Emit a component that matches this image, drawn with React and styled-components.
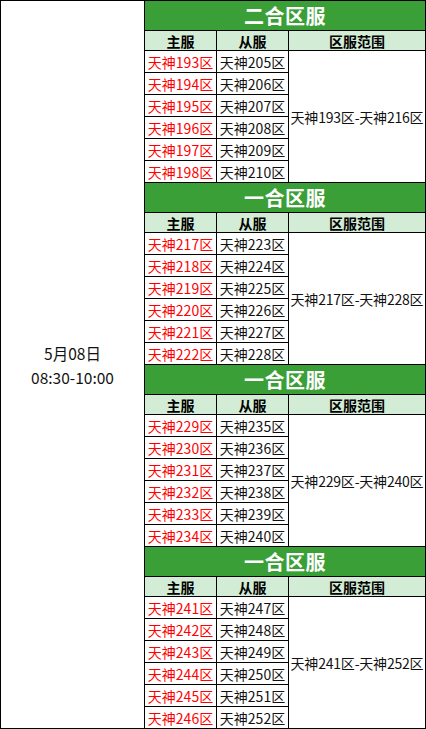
import React from 'react';
import styled, { createGlobalStyle } from 'styled-components';

const GlobalStyle = createGlobalStyle`
  html, body {
    margin: 0;
    padding: 0;
    background: #fff;
  }
  body {
    font-family: "Noto Sans CJK SC", "Noto Sans", sans-serif;
  }
`;

const Board = styled.div`
  display: grid;
  grid-template-columns: 143px 280px;
  gap: 1px;
  padding: 1px;
  width: 424px;
  background: #000;
`;

const DateCell = styled.div`
  background: #fff;
  display: flex;
  flex-direction: column;
  align-items: center;
  justify-content: center;
  font-size: 15.5px;
  line-height: 24px;
  color: #111;
`;

const Groups = styled.div`
  display: flex;
  flex-direction: column;
  gap: 1px;
`;

const Group = styled.div`
  display: grid;
  grid-template-columns: 71px 71px 136px;
  grid-template-rows: 29px 19px repeat(6, 21px);
  gap: 1px;
`;

const Title = styled.div`
  grid-column: 1 / 4;
  background: #3a9f37;
  color: #fff;
  font-weight: 700;
  font-size: 20px;
  display: flex;
  align-items: center;
  justify-content: center;
  letter-spacing: 0.5px;
`;

const HeadCell = styled.div`
  background: #d3ecd5;
  color: #000;
  font-weight: 700;
  font-size: 14px;
  display: flex;
  align-items: center;
  justify-content: center;
`;

const Cell = styled.div`
  background: #fff;
  color: ${p => (p.$main ? '#ff0000' : '#111')};
  font-size: 14px;
  line-height: 20px;
  display: flex;
  align-items: center;
  justify-content: center;
  white-space: nowrap;
`;

const RangeCell = styled(Cell)`
  grid-column: 3;
  grid-row: 3 / 9;
  letter-spacing: -0.2px;
`;

const groups = [
  { title: '二合区服', main: 193, sub: 205, range: '天神193区-天神216区' },
  { title: '一合区服', main: 217, sub: 223, range: '天神217区-天神228区' },
  { title: '一合区服', main: 229, sub: 235, range: '天神229区-天神240区' },
  { title: '一合区服', main: 241, sub: 247, range: '天神241区-天神252区' },
];

const ServerGroup = ({ title, main, sub, range }) => (
  <Group>
    <Title>{title}</Title>
    <HeadCell>主服</HeadCell>
    <HeadCell>从服</HeadCell>
    <HeadCell>区服范围</HeadCell>
    {[0, 1, 2, 3, 4, 5].map(i => (
      <React.Fragment key={i}>
        <Cell $main style={{ gridColumn: 1, gridRow: i + 3 }}>{`天神${main + i}区`}</Cell>
        <Cell style={{ gridColumn: 2, gridRow: i + 3 }}>{`天神${sub + i}区`}</Cell>
      </React.Fragment>
    ))}
    <RangeCell>{range}</RangeCell>
  </Group>
);

export default function App() {
  return (
    <>
      <GlobalStyle />
      <Board>
        <DateCell>
          <div>5月08日</div>
          <div>08:30-10:00</div>
        </DateCell>
        <Groups>
          {groups.map((g, i) => (
            <ServerGroup key={i} {...g} />
          ))}
        </Groups>
      </Board>
    </>
  );
}
